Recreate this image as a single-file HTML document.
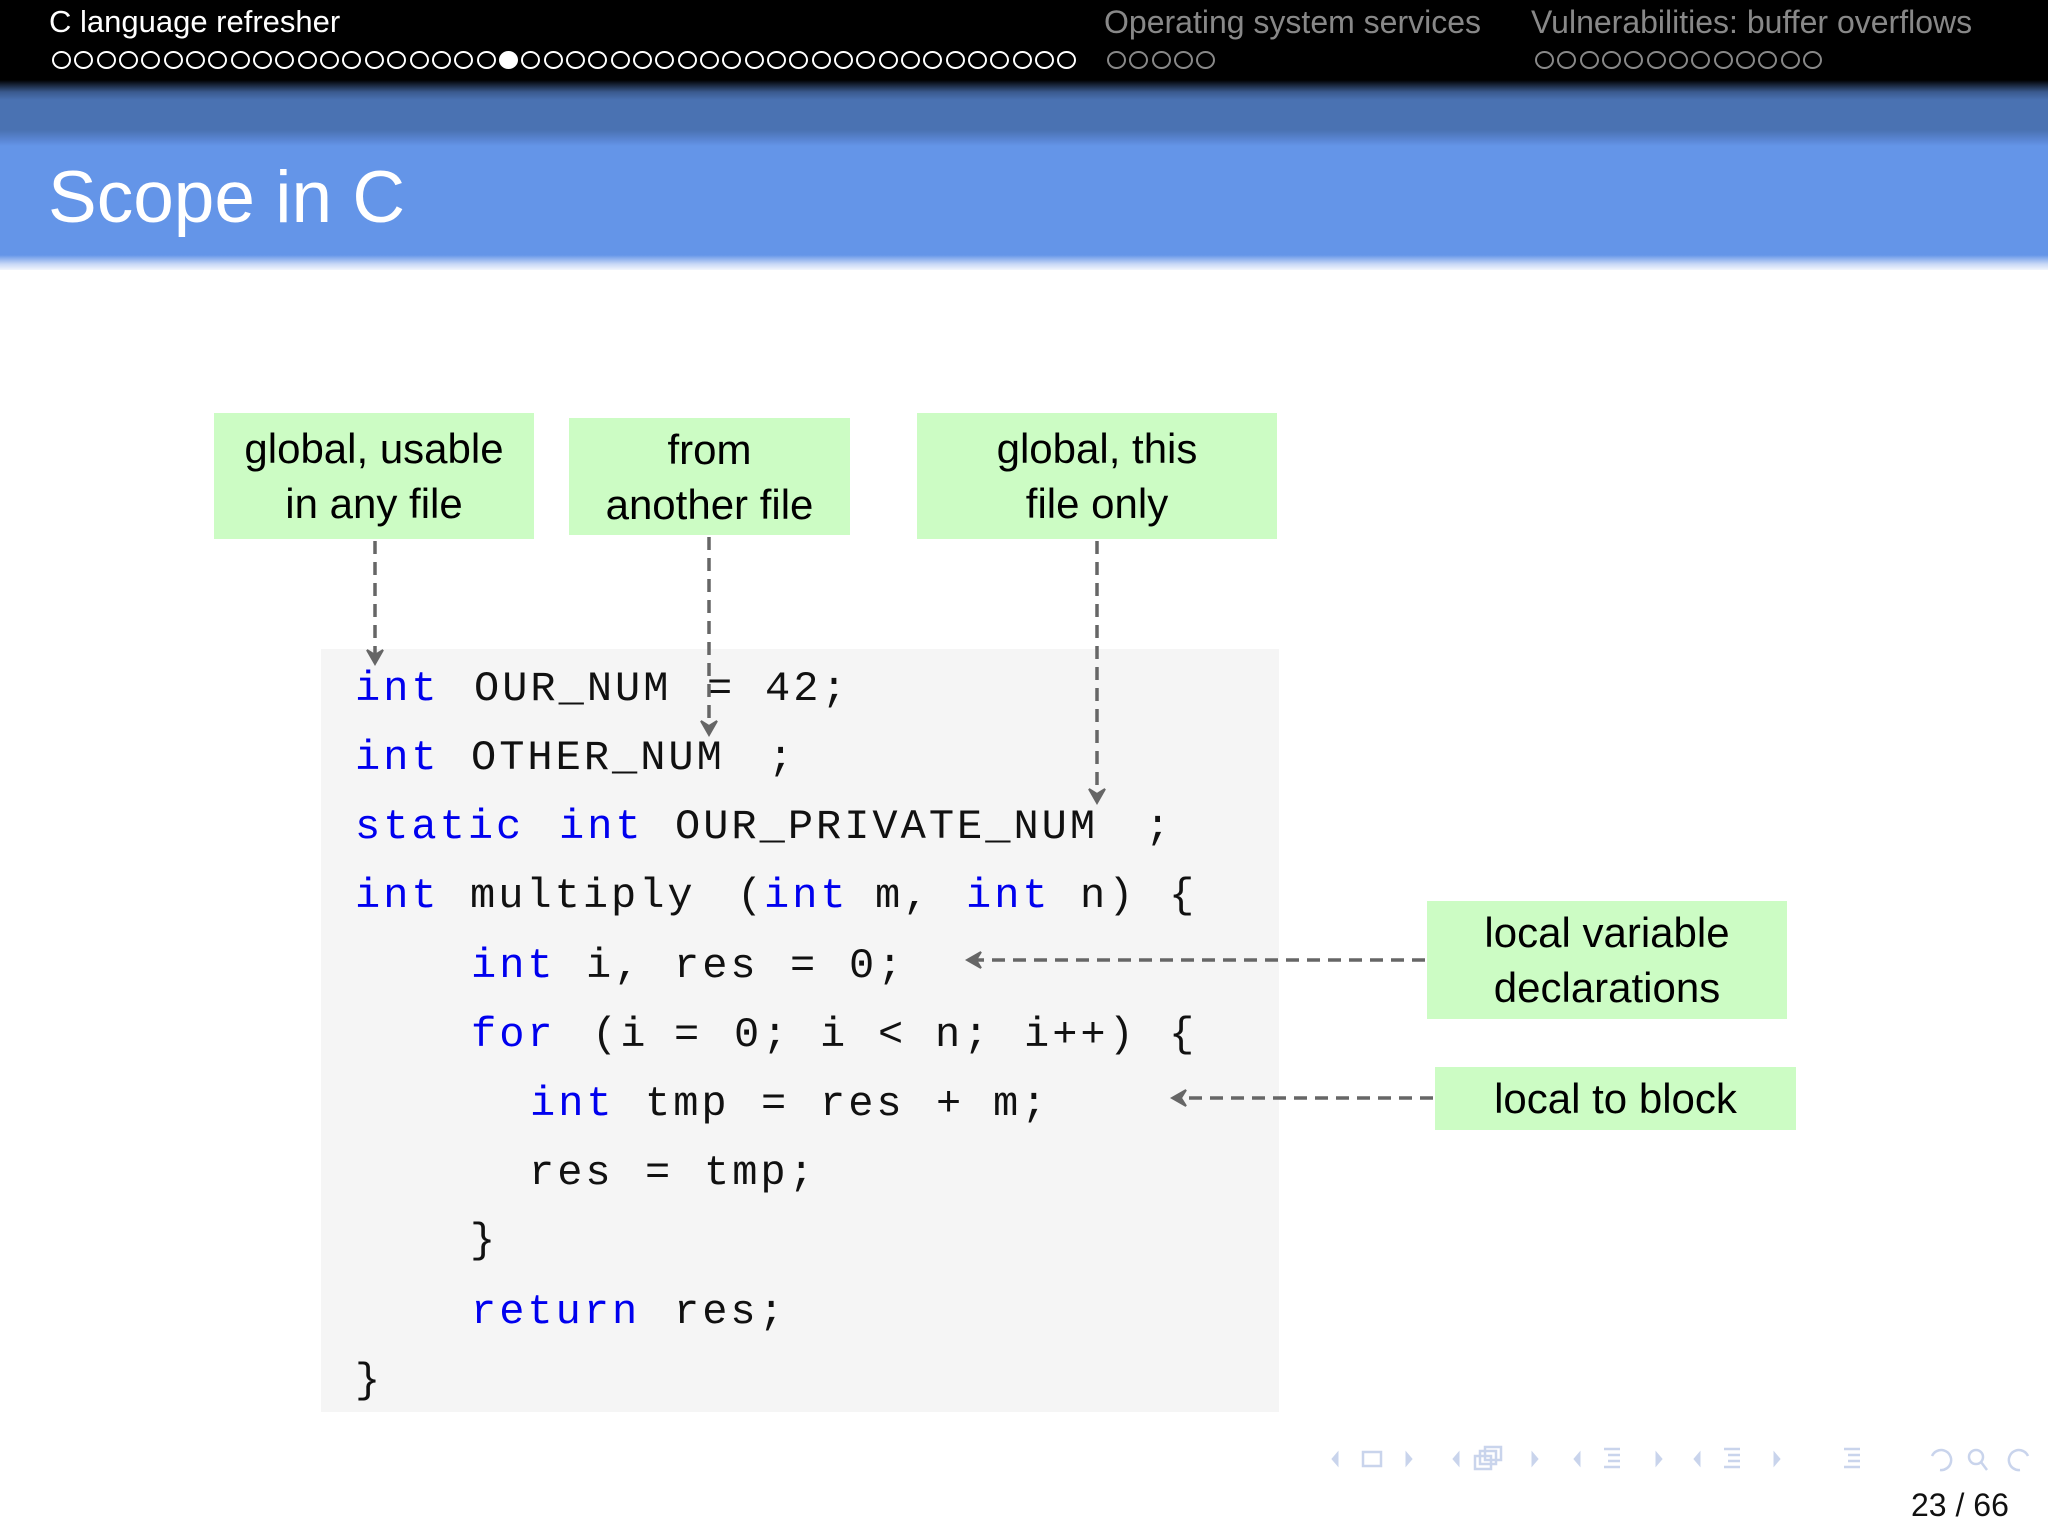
<!DOCTYPE html>
<html><head><meta charset="utf-8"><style>
body{margin:0;width:2048px;height:1536px;position:relative;background:#fff;overflow:hidden;font-family:"Liberation Sans",sans-serif}
.a{position:absolute}
#hdr{left:0;top:0;width:2048px;height:270px;background:linear-gradient(#000 0,#000 80px,#3a5a8e 92px,#4a72b2 100px,#4a72b2 130px,#5a86d4 140px,#6495e8 146px,#6495e8 255px,#c8d8f6 264px,#fff 272px)}
.dots{font-size:0;white-space:nowrap}
.dots span{display:inline-block;width:19px;height:18px;border:2.4px solid #fff;border-radius:50%;margin-right:3.35px;box-sizing:border-box}
.dots span.f{background:#fff}
.g span{border-color:#888}
.box{position:absolute;background:#ccfcc4;font-size:42px;text-align:center;line-height:55px;color:#000;display:flex;flex-direction:column;justify-content:center}
.code{position:absolute;left:321px;top:649px;width:958px;height:763px;background:#f5f5f5}
.t{position:absolute;font-family:"Liberation Mono",monospace;font-size:42px;letter-spacing:3px;line-height:1;white-space:pre;color:#111}
.k{color:#0000ee}
</style></head><body>
<div id="hdr" class="a"></div>
<div class="a" style="left:49px;top:4px;font-size:31px;color:#fff">C language refresher</div>
<div class="a" style="left:1104px;top:4px;font-size:32px;color:#888">Operating system services</div>
<div class="a" style="left:1531px;top:4px;font-size:32px;color:#888">Vulnerabilities: buffer overflows</div>
<div class="a dots" style="left:52px;top:51px" id="d1"></div>
<div class="a dots g" style="left:1107px;top:51px" id="d2"></div>
<div class="a dots g" style="left:1535px;top:51px" id="d3"></div>
<script>
function mk(id,n,f){var s='';for(var i=0;i<n;i++)s+='<span'+(i===f?' class="f"':'')+'></span>';document.getElementById(id).innerHTML=s;}
mk('d1',46,20);mk('d2',5,-1);mk('d3',13,-1);
</script>
<div class="a" style="left:48px;top:156px;font-size:73px;color:#fff">Scope in C</div>

<div class="box" style="left:214px;top:413px;width:320px;height:126px"><div>global, usable</div><div>in any file</div></div>
<div class="box" style="left:569px;top:418px;width:281px;height:117px"><div>from</div><div>another file</div></div>
<div class="box" style="left:917px;top:413px;width:360px;height:126px"><div>global, this</div><div>file only</div></div>
<div class="box" style="left:1427px;top:901px;width:360px;height:118px"><div>local variable</div><div>declarations</div></div>
<div class="box" style="left:1435px;top:1067px;width:361px;height:63px"><div>local to block</div></div>

<div class="code"></div>
<div id="code"></div>
<script>
var L=[
[525,[[272,'int',1],[363,'OUR_NUM'],[541,'='],[586,'42;']]],
[578,[[272,'int',1],[361,'OTHER_NUM'],[588,';']]],
[631,[[272,'static',1],[428,'int',1],[517,'OUR_PRIVATE_NUM'],[877,';']]],
[684,[[272,'int',1],[360,'multiply'],[564,'('],[585,'int',1],[670,'m,'],[740,'int',1],[827,'n)'],[895,'{']]],
[737,[[361,'int',1],[449,'i,'],[516,'res'],[605,'='],[650,'0;']]],
[790,[[361,'for',1],[453,'(i'],[516,'='],[562,'0;'],[628,'i'],[672,'<'],[716,'n;'],[784,'i++)'],[895,'{']]],
[843,[[406,'int',1],[494,'tmp'],[583,'='],[628,'res'],[717,'+'],[760,'m;']]],
[896,[[405,'res'],[494,'='],[539,'tmp;']]],
[948,[[360,'}']]],
[1002,[[361,'return',1],[516,'res;']]],
[1055,[[272,'}']]]];
var h='';L.forEach(function(l){l[1].forEach(function(t){h+='<div class="t'+(t[2]?' k':'')+'" style="left:'+Math.round(t[0]*1.306)+'px;top:'+Math.round(l[0]*1.306-18)+'px">'+t[1]+'</div>';});});
document.getElementById('code').innerHTML=h;
</script>

<svg class="a" style="left:0;top:0" width="2048" height="1536">
<g stroke="#666" stroke-width="3.5" stroke-dasharray="13 8" fill="none">
<line x1="375" y1="541" x2="375" y2="655"/>
<line x1="709" y1="537" x2="709" y2="726"/>
<line x1="1097" y1="541" x2="1097" y2="794"/>
<line x1="1425" y1="960" x2="975" y2="960"/>
<line x1="1433" y1="1098" x2="1180" y2="1098"/>
</g>
<g fill="#666" stroke="#666" stroke-width="2">
<path d="M367 650 L375 664 L383 650 L375 655Z"/>
<path d="M701 721 L709 735 L717 721 L709 726Z"/>
<path d="M1089 789 L1097 803 L1105 789 L1097 794Z"/>
<path d="M981 952 L967 960 L981 968 L976 960Z"/>
<path d="M1186 1090 L1172 1098 L1186 1106 L1181 1098Z"/>
</g>
<g fill="#c9d4ec" stroke="#c9d4ec">
<path d="M1338 1452 L1332 1459 L1338 1466Z"/><rect x="1363" y="1452" width="18" height="14" fill="none" stroke-width="2.5"/><path d="M1406 1452 L1412 1459 L1406 1466Z"/>
<path d="M1459 1452 L1453 1459 L1459 1466Z"/><rect x="1475" y="1456" width="16" height="13" fill="none" stroke-width="2.5"/><rect x="1480" y="1451" width="16" height="13" fill="none" stroke-width="2.5"/><rect x="1485" y="1447" width="16" height="13" fill="none" stroke-width="2.5"/><path d="M1532 1452 L1538 1459 L1532 1466Z"/>
<path d="M1580 1452 L1574 1459 L1580 1466Z"/><g stroke-width="2.5"><line x1="1604" y1="1449" x2="1620" y2="1449"/><line x1="1608" y1="1455" x2="1620" y2="1455"/><line x1="1608" y1="1461" x2="1620" y2="1461"/><line x1="1604" y1="1467" x2="1620" y2="1467"/></g><path d="M1656 1452 L1662 1459 L1656 1466Z"/>
<path d="M1700 1452 L1694 1459 L1700 1466Z"/><g stroke-width="2.5"><line x1="1724" y1="1449" x2="1740" y2="1449"/><line x1="1728" y1="1455" x2="1740" y2="1455"/><line x1="1728" y1="1461" x2="1740" y2="1461"/><line x1="1724" y1="1467" x2="1740" y2="1467"/></g><path d="M1774 1452 L1780 1459 L1774 1466Z"/>
<g stroke-width="2.5"><line x1="1844" y1="1449" x2="1860" y2="1449"/><line x1="1848" y1="1455" x2="1860" y2="1455"/><line x1="1848" y1="1461" x2="1860" y2="1461"/><line x1="1844" y1="1467" x2="1860" y2="1467"/></g>
<g fill="none" stroke-width="2.5"><path d="M1932 1456 A10 10 0 1 1 1940 1470"/><circle cx="1976" cy="1457" r="7"/><line x1="1981" y1="1462" x2="1987" y2="1470"/><path d="M2028 1456 A10 10 0 1 0 2020 1470"/></g>
</g>
</svg>
<div class="a" style="left:1911px;top:1487px;font-size:32px;color:#111">23 / 66</div>
</body></html>
